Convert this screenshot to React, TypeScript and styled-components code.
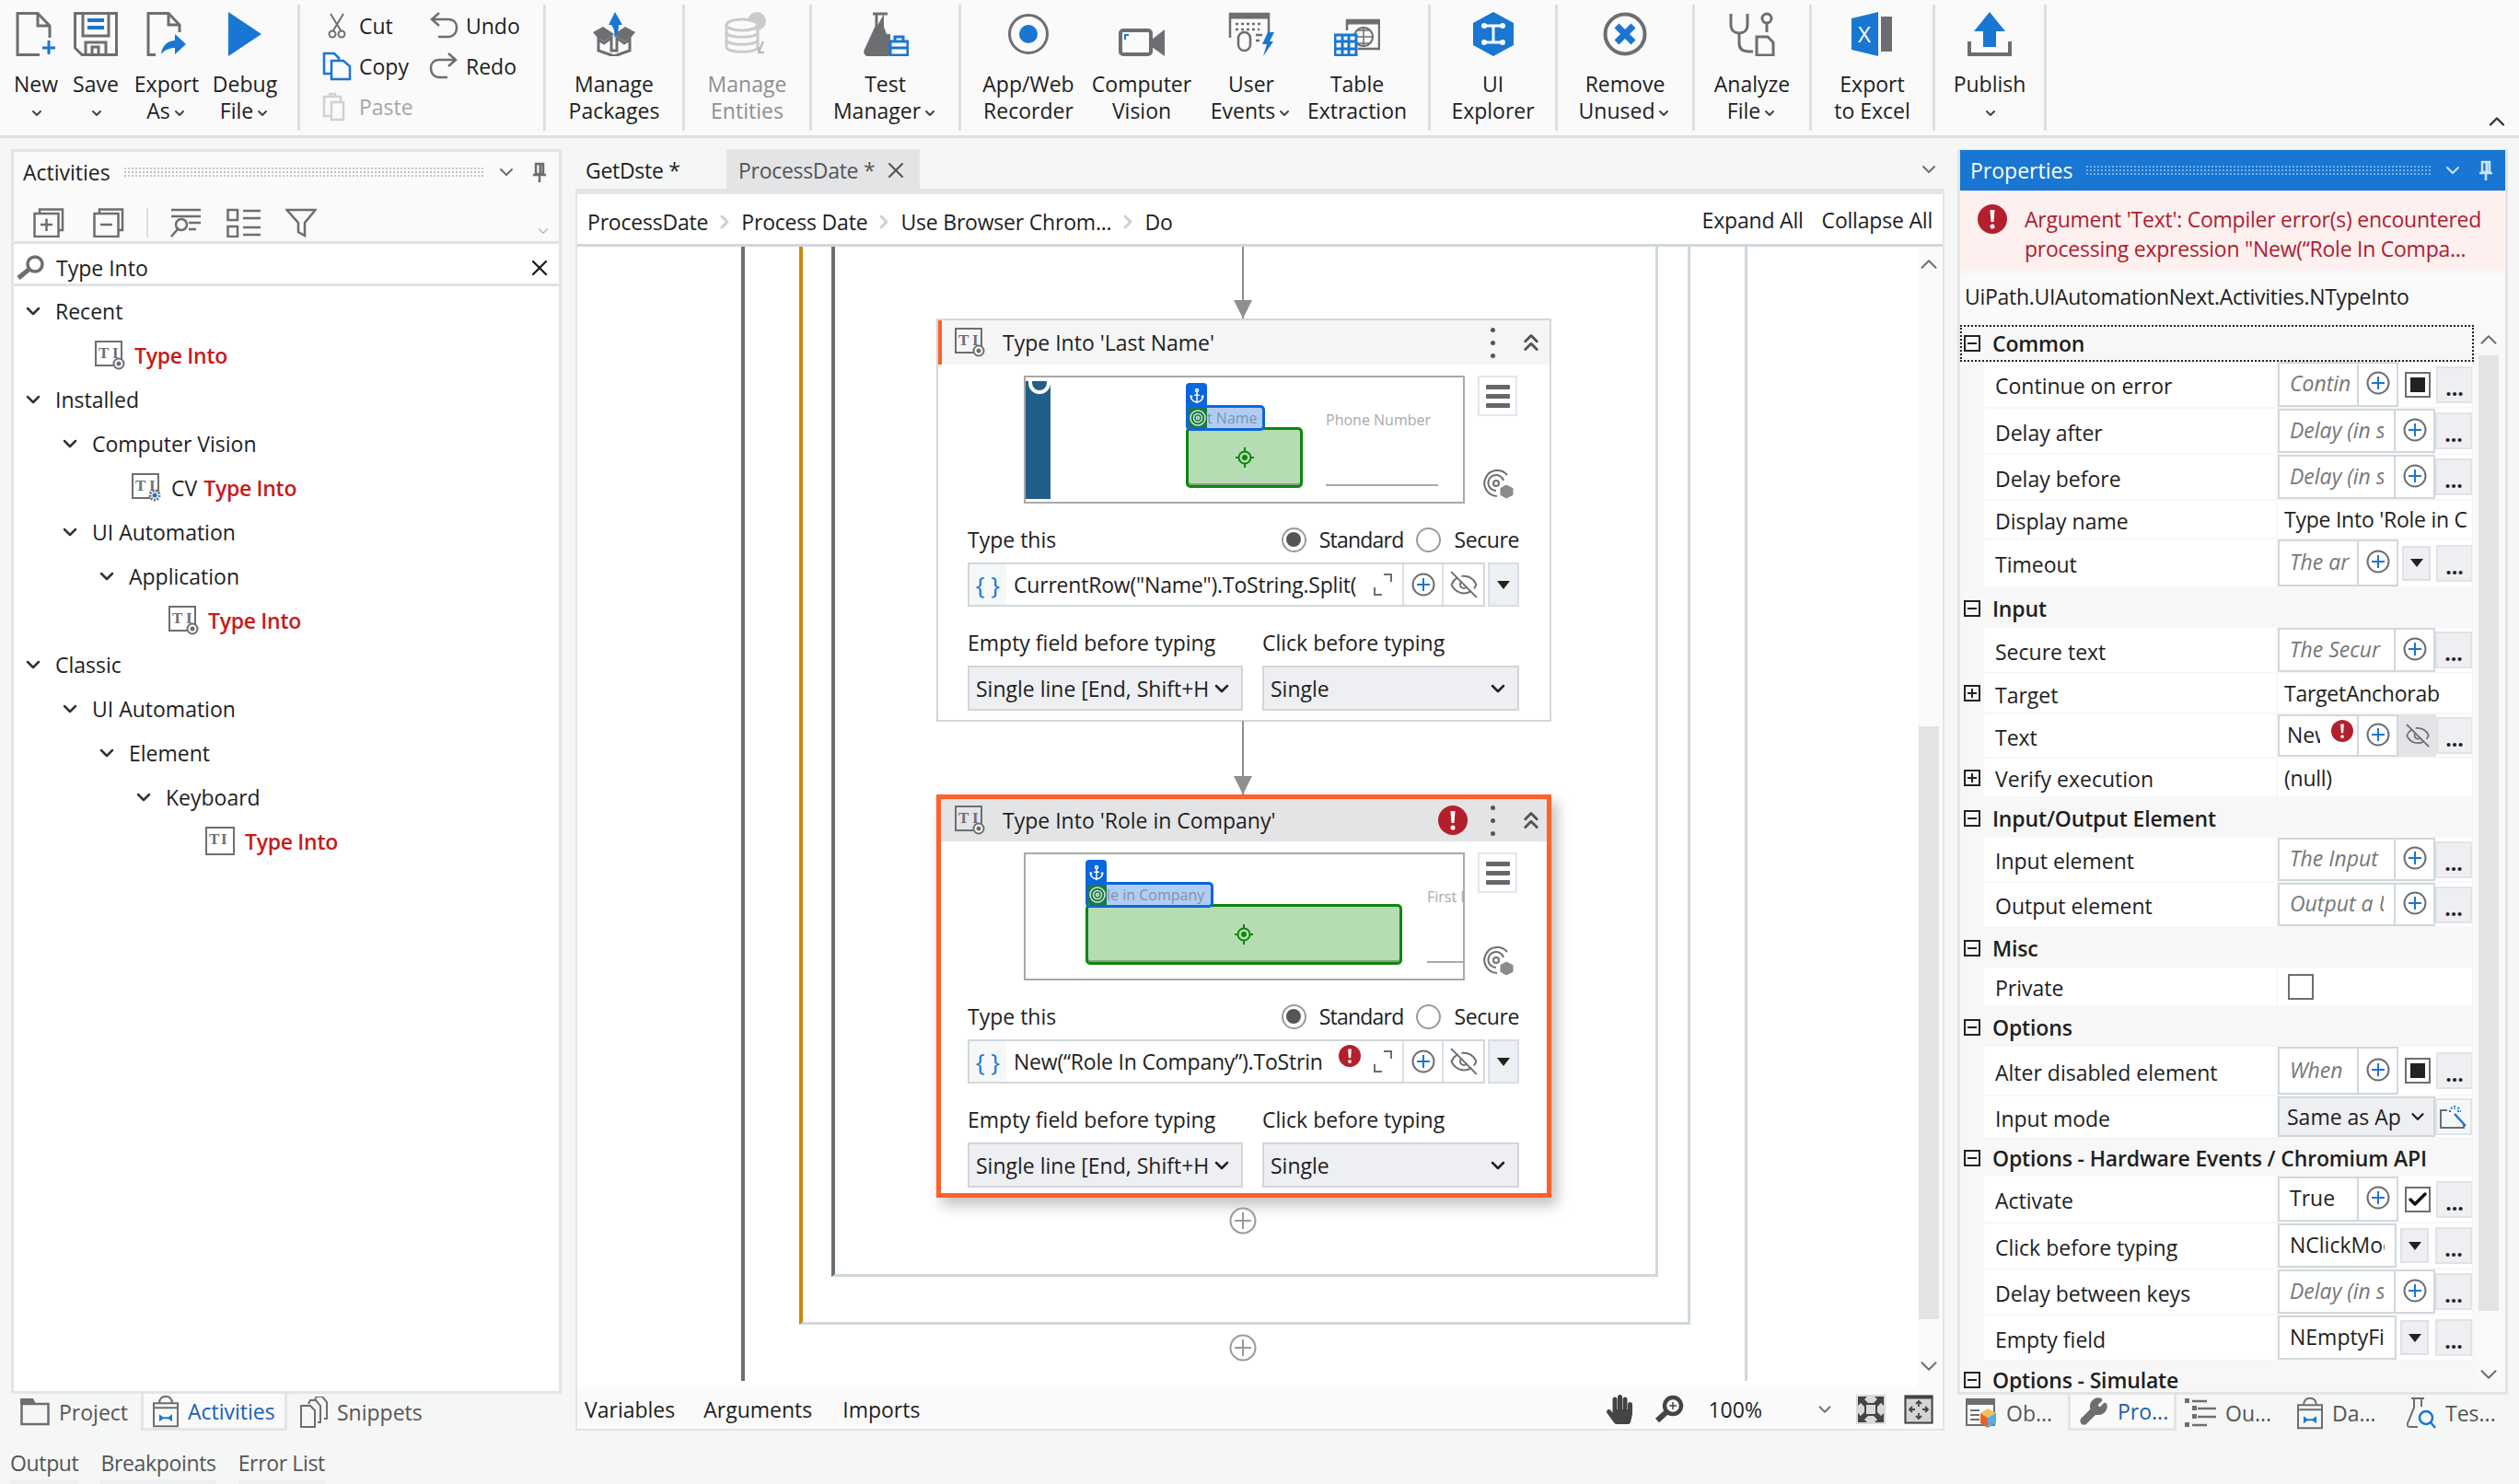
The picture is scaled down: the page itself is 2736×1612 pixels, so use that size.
import React from "react";
import styled, { createGlobalStyle } from "styled-components";
import { Anchor, Check, ChevronDown, ChevronRight, ChevronUp, ChevronsUp, EyeOff, Wrench, X } from "lucide-react";
import { FaHandPaper } from "react-icons/fa";

const G = "#6d6e71";
const B = "#1976d2";
const LINE = "#d0d8dc";
const BAND = "#e3e4e6";

const GlobalStyle = createGlobalStyle`
  html, body { margin: 0; padding: 0; background: #f5f7f7; }
  * { box-sizing: border-box; }
  body { font-family: "Open Sans", "Noto Sans", sans-serif; font-size: 23px; color: #1e1e1e; }
`;

/* ---------- ribbon icons ---------- */
const NewIcon = () => (
  <svg width="44" height="48" viewBox="0 0 44 48" fill="none" stroke={G} strokeWidth="3">
    <path d="M26 46.500H2V1.500H24L37 15V28M24 1.500V15H37" />
    <path d="M36 31v15M29 39h14" stroke={B} />
  </svg>
);
const SaveIcon = () => (
  <svg width="48" height="48" viewBox="0 0 48 48" fill="none" stroke={G} strokeWidth="3">
    <path d="M1.500 1.500H46.500V46.500H9L1.500 39Z" />
    <path d="M10 2V26H38V2" />
    <path d="M15 9H33M15 17H33" stroke={B} strokeWidth="4" />
    <path d="M13 46V33H35V46M20 46V38H27V46" />
  </svg>
);
const ExportIcon = () => (
  <svg width="44" height="48" viewBox="0 0 44 48" fill="none" stroke={G} strokeWidth="3">
    <path d="M10 46.500H2V1.500H24L36 14V22M24 1.500V14H36" />
    <path d="M16 46C17 36 24 31 31 31V24L43 35L31 46V39C25 39 20 41 16 46Z" fill={B} stroke="none" />
  </svg>
);
const PlayIcon = () => (
  <svg width="36" height="48" viewBox="0 0 36 48">
    <path d="M0 0L36 24L0 48Z" fill={B} />
  </svg>
);
const CutIcon = () => (
  <svg width="22" height="28" viewBox="0 0 22 28" fill="none" stroke={G} strokeWidth="2">
    <path d="M4 1L15 19M18 1L7 19" />
    <circle cx="6" cy="23" r="3.500" />
    <circle cx="16" cy="23" r="3.500" />
  </svg>
);
const CopyIcon = () => (
  <svg width="32" height="32" viewBox="0 0 32 32" fill="none" stroke={B} strokeWidth="2.500">
    <path d="M10 24H2V2H13L18 7V10" />
    <path d="M10 10H23L30 16V30H10Z" />
  </svg>
);
const PasteIcon = () => (
  <svg width="32" height="32" viewBox="0 0 32 32" fill="none" stroke="#cfd2d4" strokeWidth="2.500">
    <path d="M9 26H2V5H20V10M8 5V2H14V5" />
    <path d="M10 11H23V30H10Z" />
  </svg>
);
const UndoIcon = () => (
  <svg width="32" height="30" viewBox="0 0 32 30" fill="none" stroke={G} strokeWidth="2.500">
    <path d="M11 1L3 8L11 15M3 8H21C27 8 30 12 30 17C30 23 26 27 21 27H10" />
  </svg>
);
const RedoIcon = () => (
  <svg width="32" height="30" viewBox="0 0 32 30" fill="none" stroke={G} strokeWidth="2.500">
    <path d="M21 1L29 8L21 15M29 8H11C5 8 2 12 2 17C2 23 6 27 11 27H20" />
  </svg>
);
const PackageIcon = () => (
  <svg width="48" height="48" viewBox="0 0 48 48">
    <path d="M1 22L12 16L24 24L13 32L6 28ZM47 22L36 16L24 24L35 32L42 28Z" fill={G} />
    <path d="M7 30V42L24 48L41 42V30L35 34L27 28V42H21V28L13 34Z" fill="none" stroke={G} strokeWidth="3" />
    <path d="M25 0L33 14H29C29 20 28 24 24 28C25 22 24 18 21 14H18Z" fill={B} />
  </svg>
);
const EntitiesIcon = () => (
  <svg width="50" height="48" viewBox="0 0 50 48" fill="none" stroke="#c9cbcd" strokeWidth="3">
    <circle cx="36" cy="10" r="10" fill="#c9cbcd" stroke="none" />
    {[14, 22, 30, 38].map((y) => (
      <path key={y} d={`M3 ${y}C3 ${y + 7} 37 ${y + 7} 37 ${y}`} />
    ))}
    <ellipse cx="20" cy="14" rx="17" ry="6" fill="#fafafa" />
    <path d="M3 14V38M37 14V38" />
    <path d="M43 32L38 44M38 38V44H44" stroke="#b5b7b9" strokeWidth="2" />
  </svg>
);
const FlaskIcon = () => (
  <svg width="50" height="48" viewBox="0 0 50 48" fill="none">
    <path d="M11 2H27M15 2V16L3 42C2 45 4 47 7 47H28" stroke={G} strokeWidth="3" />
    <path d="M23 2V16L26 24H30V47H7C3 47 2 44 3 42L9 28Z" fill={G} />
    <path d="M30 32H49V47H30ZM35 32V27H44V32M30 39H49" stroke={B} strokeWidth="3" fill="#fafafa" />
  </svg>
);
const RecordIcon = () => (
  <svg width="46" height="48" viewBox="0 0 46 48" fill="none">
    <circle cx="23" cy="24" r="20.500" stroke={G} strokeWidth="3" />
    <circle cx="23" cy="24" r="10" fill={B} />
  </svg>
);
const CameraIcon = () => (
  <svg width="50" height="48" viewBox="0 0 50 48" fill="none">
    <rect x="2" y="20" width="33" height="26" rx="3" stroke={G} strokeWidth="4" />
    <path d="M36 30L50 19V48L36 38Z" fill={G} />
    <path d="M7 30V25H11" stroke={B} strokeWidth="2" />
  </svg>
);
const UserEventsIcon = () => (
  <svg width="50" height="48" viewBox="0 0 50 48" fill="none" stroke={G} strokeWidth="2.500">
    <path d="M2 28V2H44V24" />
    <path d="M2 5H44" strokeWidth="5" />
    <path d="M8 13H38M8 19H34" strokeDasharray="3 3" />
    <rect x="11" y="22" width="13" height="20" rx="6.500" fill="#fafafa" />
    <path d="M30 25H37M30 31H34" />
    <path d="M43 22H50L45 32H49L38 48L42 35H37Z" fill={B} stroke="none" />
  </svg>
);
const TableExtractIcon = () => (
  <svg width="50" height="48" viewBox="0 0 50 48" fill="none" stroke={G} strokeWidth="2">
    <path d="M14 20V9H49V40H26" strokeWidth="2.500" />
    <path d="M14 11H49" strokeWidth="5" />
    <circle cx="32" cy="27" r="10" />
    <path d="M22 27H42M32 17V37M25 20H39M25 34H39" strokeWidth="1.500" />
    <path d="M1 25H24V47H1ZM1 32H24M1 40H24M9 25V47M16 25V47" stroke={B} strokeWidth="3" fill="#fafafa" />
  </svg>
);
const HexIcon = () => (
  <svg width="46" height="48" viewBox="0 0 46 48">
    <path d="M23 0L45 12V36L23 48L1 36V12Z" fill={B} />
    <path d="M13 15H33M23 15V33M13 33H33" stroke="#fff" strokeWidth="3" fill="none" />
    {[[13, 15], [33, 15], [13, 33], [33, 33]].map(([x, y]) => (
      <circle key={x * y} cx={x} cy={y} r="3" fill="#fff" />
    ))}
  </svg>
);
const RemoveIcon = () => (
  <svg width="48" height="48" viewBox="0 0 48 48" fill="none">
    <circle cx="24" cy="24" r="21.500" stroke={G} strokeWidth="4" />
    <path d="M15 15L33 33M33 15L15 33" stroke={B} strokeWidth="7" />
  </svg>
);
const AnalyzeIcon = () => (
  <svg width="50" height="48" viewBox="0 0 50 48" fill="none" stroke={G} strokeWidth="3">
    <path d="M2 2V14C2 20 6 23 11 23C16 23 20 20 20 14V2" />
    <path d="M11 23V34C11 40 15 43 22 43H26" />
    <circle cx="41" cy="7" r="5" />
    <path d="M41 12V22" />
    <path d="M30 47V27H42L48 33V47Z" />
  </svg>
);
const ExcelIcon = () => (
  <svg width="44" height="48" viewBox="0 0 44 48">
    <path d="M0 7L29 0V48L0 41Z" fill={B} />
    <rect x="32" y="5" width="12" height="38" fill={G} />
    <text x="7" y="33" fill="#fff" fontSize="24" fontFamily="Open Sans">X</text>
  </svg>
);
const PublishIcon = () => (
  <svg width="48" height="48" viewBox="0 0 48 48" fill="none">
    <path d="M24 0L41 21H31V38H17V21H7Z" fill={B} />
    <path d="M2 32V46H46V32" stroke={G} strokeWidth="4" />
  </svg>
);

/* ---------- small icons ---------- */
const TreeAddIcon = ({ minus }: { minus?: boolean }) => (
  <svg width="34" height="32" viewBox="0 0 34 32" fill="none" stroke={G} strokeWidth="2.500">
    <path d="M7 6V1.500H32V24H28" />
    <rect x="1.500" y="6" width="26" height="25" />
    <path d={minus ? "M8 18H21" : "M8 18H21M14.500 11.500V25"} />
  </svg>
);
const SearchListIcon = () => (
  <svg width="34" height="32" viewBox="0 0 34 32" fill="none" stroke={G} strokeWidth="2.500">
    <path d="M1 2H33M1 9H33M20 16H33M20 23H28" />
    <circle cx="12" cy="18" r="6" />
    <path d="M8 23L1 31" />
  </svg>
);
const GridListIcon = () => (
  <svg width="38" height="32" viewBox="0 0 38 32" fill="none" stroke={G} strokeWidth="2.500">
    <path d="M1.500 2H12V13H1.500ZM1.500 20H12V31H1.500ZM18 3H37M18 11H37M18 21H37M18 29H37" />
  </svg>
);
const FunnelIcon = () => (
  <svg width="34" height="32" viewBox="0 0 34 32" fill="none" stroke={G} strokeWidth="2.500">
    <path d="M1.500 2H32.500L21 16V30L14 26V16Z" />
  </svg>
);
const PinIcon = ({ c = G }: { c?: string }) => (
  <svg width="16" height="22" viewBox="0 0 16 22" fill="none" stroke={c} strokeWidth="2.500">
    <path d="M4 2H12V13H4ZM1 14H15M8 14V22" />
    <path d="M9 2V13" strokeWidth="3" />
  </svg>
);
const MagnifierIcon = () => (
  <svg width="32" height="28" viewBox="0 0 32 28" fill="none" stroke={G}>
    <circle cx="21" cy="10" r="8" strokeWidth="3.500" />
    <path d="M14 16L3 25" strokeWidth="5" />
  </svg>
);
const TypeIntoIcon = ({ mode = "target" }: { mode?: "target" | "gear" | "plain" }) => (
  <svg width="33" height="32" viewBox="0 0 33 32" fill="none" stroke={G} strokeWidth="2">
    <path d={mode === "plain" ? "M1 1H31V30H1Z" : "M20 27H1V1H29V20"} />
    <text x="4" y="19" fill={G} stroke="none" fontSize="17" fontWeight="700" fontFamily="Liberation Serif">T</text>
    <text x={mode === "plain" ? 17 : 19} y="19" fill={G} stroke="none" fontSize="17" fontWeight="700" fontFamily="Liberation Serif">I</text>
    {mode === "target" && <circle cx="26" cy="25" r="5.500" fill="#fff" />}
    {mode === "target" && <circle cx="26" cy="25" r="1.500" fill={G} />}
    {mode === "gear" && <circle cx="25" cy="24" r="5" fill="#fff" strokeWidth="3" strokeDasharray="2 1.400" />}
    {mode === "gear" && <circle cx="25" cy="24" r="2.500" fill={B} stroke="none" />}
  </svg>
);
const PlusCircle = ({ s = 26 }: { s?: number }) => (
  <svg width={s} height={s} viewBox="0 0 26 26" fill="none">
    <circle cx="13" cy="13" r="11.500" stroke={G} strokeWidth="2" />
    <path d="M13 6V20M6 13H20" stroke={B} strokeWidth="2" />
  </svg>
);
const GrayPlus = () => (
  <svg width="30" height="30" viewBox="0 0 30 30" fill="#fff">
    <circle cx="15" cy="15" r="13.500" stroke="#9a9a9a" strokeWidth="2" />
    <path d="M15 6V24M6 15H24" stroke="#9a9a9a" strokeWidth="2" />
  </svg>
);
const ErrorBadge = ({ s = 32 }: { s?: number }) => (
  <svg width={s} height={s} viewBox="0 0 32 32">
    <circle cx="16" cy="16" r="16" fill="#b3202c" />
    <path d="M13.500 6H18.500L17.500 19H14.500Z" fill="#fff" />
    <circle cx="16" cy="24" r="2.500" fill="#fff" />
  </svg>
);
const ExpandIcon = () => (
  <svg width="20" height="24" viewBox="0 0 20 24" fill="none" stroke={G} strokeWidth="2">
    <path d="M11 1H19V9M1 15V23H9" />
  </svg>
);
const Crosshair = () => (
  <svg width="20" height="22" viewBox="0 0 20 22" fill="none" stroke="#0d860d" strokeWidth="2">
    <circle cx="10" cy="11" r="6.500" />
    <circle cx="10" cy="11" r="2" fill="#0d860d" />
    <path d="M10 0V4M10 18V22M0 11H3M17 11H20" />
  </svg>
);
const Bullseye = () => (
  <svg width="18" height="18" viewBox="0 0 18 18" fill="none" stroke="#cfe6d8" strokeWidth="1.500">
    <circle cx="9" cy="9" r="8" />
    <circle cx="9" cy="9" r="4.500" />
    <circle cx="9" cy="9" r="1.500" />
  </svg>
);
const TargetCube = () => (
  <svg width="34" height="32" viewBox="0 0 34 32" fill="none" stroke={G} strokeWidth="2">
    <path d="M27 6A14 14 0 1 0 16 29" />
    <path d="M23 12A8.500 8.500 0 1 0 15 23" />
    <circle cx="15" cy="15" r="3" />
    <path d="M26 16L34 20V28L26 32L19 28V20Z" fill="#8a8b8d" stroke="#fff" strokeWidth="1" />
  </svg>
);
const FolderIcon = () => (
  <svg width="32" height="30" viewBox="0 0 32 30" fill="none" stroke={G} strokeWidth="2.500">
    <path d="M1.500 6H30.500V28H1.500Z" />
    <path d="M0 0H14L17 6H0Z" fill={G} stroke="none" />
  </svg>
);
const BagIcon = ({ size = 28 }: { size?: number }) => (
  <svg width={size} height={size * 1.3} viewBox="0 0 28 36" fill="none" stroke={G} strokeWidth="2">
    <path d="M1 10H27V35H1ZM7 10C7 0 21 0 21 10M1 15H27" />
    <path d="M7 22L11 25H17L21 22V30L17 27H11L7 30Z" fill={B} stroke="none" />
  </svg>
);
const SnippetsIcon = () => (
  <svg width="30" height="34" viewBox="0 0 30 34" fill="none" stroke={G} strokeWidth="2">
    <path d="M16 3L18 0H24L29 6V24H26" />
    <path d="M9 8L11 4H17L22 10V28H19" />
    <path d="M1 10H11L16 15V33H1Z" fill="#f5f7f7" />
  </svg>
);
const ObjectsIcon = () => (
  <svg width="34" height="34" viewBox="0 0 34 34" fill="none">
    <rect x="1" y="2" width="30" height="28" fill="#fafafa" stroke={G} strokeWidth="2" />
    <rect x="1" y="2" width="30" height="6" fill={G} />
    <path d="M5 14H15M5 19H15M5 24H15" stroke={G} strokeWidth="2" />
    <path d="M24 12L33 17L24 22L16 17Z" fill="#f0c25c" />
    <path d="M16 17L24 22V33L16 28Z" fill="#e8632c" />
    <path d="M33 17L24 22V33L33 28Z" fill="#5ea9de" />
  </svg>
);
const OutlineIcon = () => (
  <svg width="34" height="32" viewBox="0 0 34 32" fill="none" stroke={G} strokeWidth="2.500">
    <path d="M8 3H24M14 11H34M14 20H34M8 29H24" />
    <path d="M0 0H5V5H0ZM8 8H13V13H8ZM8 17H13V22H8ZM0 26H5V31H0Z" fill={G} stroke="none" />
  </svg>
);
const FlaskSearchIcon = () => (
  <svg width="32" height="34" viewBox="0 0 32 34" fill="none" stroke={G} strokeWidth="2">
    <path d="M5 1H19M8 1V11L1 28C0 31 2 32 4 32H12M16 1V10" />
    <circle cx="21" cy="22" r="7" stroke={B} strokeWidth="2.500" />
    <path d="M26 27L31 33" stroke={B} strokeWidth="2.500" />
  </svg>
);
const ZoomGlass = () => (
  <svg width="32" height="32" viewBox="0 0 32 32" fill="none">
    <circle cx="20" cy="12" r="9" stroke="#444" strokeWidth="4.500" />
    <path d="M20 8V16M16 12H24" stroke="#444" strokeWidth="1.500" />
    <path d="M13 19L3 28" stroke="#444" strokeWidth="6" />
  </svg>
);
const FitIcon = () => (
  <svg width="32" height="32" viewBox="0 0 32 32">
    <rect width="32" height="32" fill="#d9d9d9" />
    <path d="M2 2H12L9 5L13 9L9 13L5 9L2 12ZM30 2H20L23 5L19 9L23 13L27 9L30 12ZM2 30H12L9 27L13 23L9 19L5 23L2 20ZM30 30H20L23 27L19 23L23 19L27 23L30 20Z" fill="#444" />
    <rect x="10" y="10" width="12" height="12" fill="none" stroke="#444" strokeWidth="2" />
  </svg>
);
const FitWindowIcon = () => (
  <svg width="32" height="32" viewBox="0 0 32 32" fill="none">
    <rect width="32" height="32" fill="#d4d4d4" />
    <rect x="1.500" y="1.500" width="29" height="29" stroke="#444" strokeWidth="2" />
    <path d="M1 3H31" stroke="#444" strokeWidth="3" />
    <path d="M16 8V13M16 20V25M6 16H12M20 16H26M13 10L16 7L19 10M13 23L16 26L19 23M9 13L6 16L9 19M23 13L26 16L23 19" stroke="#444" strokeWidth="1.800" />
  </svg>
);
const DropCaret = () => (
  <svg width="14" height="9" viewBox="0 0 14 9"><path d="M0 0H14L7 9Z" fill="#222" /></svg>
);
const MagicIcon = () => (
  <svg width="30" height="26" viewBox="0 0 30 26" fill="none" strokeWidth="2">
    <path d="M8 6H1V25H26V20" stroke={G} />
    <path d="M16 10L28 23" stroke={B} strokeWidth="2.500" />
    <path d="M16 1V5M10 7H13M19 7H23M12 3L14 5M21 3L19 5" stroke={B} strokeDasharray="2 1" />
  </svg>
);

/* ---------- ribbon ---------- */
const Ribbon = styled.header`
  display: flex;
  height: 150px;
  background: #fafafa;
  border-bottom: 3px solid #dcdfe0;
`;
const RibbonGroup = styled.div<{ $w: number; $center?: boolean }>`
  display: flex;
  justify-content: ${(p) => (p.$center ? "center" : "flex-start")};
  width: ${(p) => p.$w}px;
  height: 137px;
  margin-top: 5px;
  border-right: 3px solid #dedfe0;
`;
const RibbonItem = styled.div<{ $w?: number; $muted?: boolean }>`
  display: flex;
  flex-direction: column;
  align-items: center;
  width: ${(p) => (p.$w ? `${p.$w}px` : "auto")};
  padding-top: 8px;
  color: ${(p) => (p.$muted ? "#8d8f91" : "#1e1e1e")};
`;
const IconSlot = styled.div`
  display: flex;
  justify-content: center;
  height: 48px;
`;
const RibbonLabel = styled.div`
  margin-top: 16px;
  text-align: center;
  line-height: 28.500px;
  white-space: nowrap;
`;
const TinyChevron = styled(ChevronDown)`
  display: inline-block;
  width: 16px;
  height: 16px;
  margin-left: 2px;
  vertical-align: -2px;
  stroke-width: 3px;
  color: #444;
`;
const ClipGrid = styled.div`
  display: grid;
  grid-template-columns: 116px 105px;
  grid-auto-rows: 44px;
  padding: 1px 0 0 24px;
`;
const ClipItem = styled.div<{ $muted?: boolean }>`
  display: flex;
  align-items: center;
  gap: 8px;
  color: ${(p) => (p.$muted ? "#a4a6a8" : "#1e1e1e")};
`;
const ClipIcon = styled.div`
  display: flex;
  justify-content: center;
  width: 32px;
`;
const RibbonCollapse = styled(ChevronUp)`
  margin: 118px 10px 0 auto;
  width: 28px;
  height: 28px;
  color: #333;
`;

type RItem = { icon: React.ReactNode; lines: [string, string]; chevron?: boolean; w?: number; muted?: boolean };
const Item = ({ icon, lines, chevron, w, muted }: RItem) => (
  <RibbonItem $w={w} $muted={muted}>
    <IconSlot>{icon}</IconSlot>
    <RibbonLabel>
      {lines[0]}
      <br />
      {lines[1]}
      {chevron && <TinyChevron />}
    </RibbonLabel>
  </RibbonItem>
);

const RibbonBar = () => (
  <Ribbon>
    <RibbonGroup $w={326}>
      <Item w={78} icon={<NewIcon />} lines={["New", ""]} chevron />
      <Item w={52} icon={<SaveIcon />} lines={["Save", ""]} chevron />
      <Item w={102} icon={<ExportIcon />} lines={["Export", "As"]} chevron />
      <Item w={68} icon={<PlayIcon />} lines={["Debug", "File"]} chevron />
    </RibbonGroup>
    <RibbonGroup $w={267}>
      <ClipGrid>
        <ClipItem><ClipIcon><CutIcon /></ClipIcon>Cut</ClipItem>
        <ClipItem><ClipIcon><UndoIcon /></ClipIcon>Undo</ClipItem>
        <ClipItem><ClipIcon><CopyIcon /></ClipIcon>Copy</ClipItem>
        <ClipItem><ClipIcon><RedoIcon /></ClipIcon>Redo</ClipItem>
        <ClipItem $muted><ClipIcon><PasteIcon /></ClipIcon>Paste</ClipItem>
      </ClipGrid>
    </RibbonGroup>
    <RibbonGroup $w={151} $center><Item icon={<PackageIcon />} lines={["Manage", "Packages"]} /></RibbonGroup>
    <RibbonGroup $w={138} $center><Item muted icon={<EntitiesIcon />} lines={["Manage", "Entities"]} /></RibbonGroup>
    <RibbonGroup $w={162} $center><Item icon={<FlaskIcon />} lines={["Test", "Manager"]} chevron /></RibbonGroup>
    <RibbonGroup $w={510}>
      <Item w={146} icon={<RecordIcon />} lines={["App/Web", "Recorder"]} />
      <Item w={100} icon={<CameraIcon />} lines={["Computer", "Vision"]} />
      <Item w={138} icon={<UserEventsIcon />} lines={["User", "Events"]} chevron />
      <Item w={92} icon={<TableExtractIcon />} lines={["Table", "Extraction"]} />
    </RibbonGroup>
    <RibbonGroup $w={138} $center><Item icon={<HexIcon />} lines={["UI", "Explorer"]} /></RibbonGroup>
    <RibbonGroup $w={149} $center><Item icon={<RemoveIcon />} lines={["Remove", "Unused"]} chevron /></RibbonGroup>
    <RibbonGroup $w={127} $center><Item icon={<AnalyzeIcon />} lines={["Analyze", "File"]} chevron /></RibbonGroup>
    <RibbonGroup $w={134} $center><Item icon={<ExcelIcon />} lines={["Export", "to Excel"]} /></RibbonGroup>
    <RibbonGroup $w={121} $center><Item icon={<PublishIcon />} lines={["Publish", ""]} chevron /></RibbonGroup>
    <RibbonCollapse />
  </Ribbon>
);

/* ---------- layout ---------- */
const Page = styled.div`
  display: flex;
  flex-direction: column;
  width: 2736px;
  height: 1612px;
  overflow: hidden;
`;
const Main = styled.main`
  display: flex;
  height: 1404px;
  padding: 12px 12px 0;
`;
const SideColumn = styled.section<{ $mr?: number }>`
  display: flex;
  flex-direction: column;
  width: 598px;
  margin-right: ${(p) => p.$mr ?? 0}px;
`;
const DockPanel = styled.div`
  display: flex;
  flex-direction: column;
  height: 1352px;
  background: #fff;
  border: 3px solid ${BAND};
`;
const TitleRow = styled.div<{ $active?: boolean }>`
  display: flex;
  align-items: center;
  flex: none;
  height: ${(p) => (p.$active ? 44 : 50)}px;
  padding: 0 13px ${(p) => (p.$active ? 0 : 6)}px ${(p) => (p.$active ? 11 : 10)}px;
  background: ${(p) => (p.$active ? B : "#fafafa")};
  color: ${(p) => (p.$active ? "#fff" : "#1e1e1e")};
`;
const GripDots = styled.div<{ $active?: boolean }>`
  flex: 1;
  height: 13px;
  margin: 0 12px 0 14px;
  background-image: radial-gradient(${(p) => (p.$active ? "#78b0ea" : "#c2c5c8")} 1px, transparent 1.300px);
  background-size: 4px 4px;
`;
const TitleChevron = styled(ChevronDown)<{ $c?: string }>`
  width: 24px;
  height: 24px;
  margin-right: 16px;
  color: ${(p) => p.$c ?? G};
`;
const ToolStrip = styled.div`
  position: relative;
  display: flex;
  align-items: center;
  flex: none;
  height: 50px;
  padding: 6px 0 0 21px;
  background: #fafafa;
  border-bottom: 3px solid #dfe3e5;
`;
const ToolButton = styled.div<{ $mr: number }>`
  display: flex;
  margin-right: ${(p) => p.$mr}px;
`;
const ToolSep = styled.div`
  width: 2px;
  height: 32px;
  margin-right: 24px;
  background: #dedfe0;
`;
const OverflowGlyph = styled.div`
  position: absolute;
  right: 8px;
  bottom: 2px;
  color: #b5b7b9;
  line-height: 0;
`;
const SearchRow = styled.div`
  display: flex;
  align-items: center;
  flex: none;
  height: 46px;
  padding: 9px 7px 0 2px;
  border-bottom: 3px solid #e1e3e4;
`;
const SearchText = styled.div`
  flex: 1;
  margin-left: 12px;
`;
const TreeList = styled.div`
  flex: 1;
  padding-top: 3px;
`;
const TreeRow = styled.div<{ $pad: number }>`
  display: flex;
  align-items: center;
  height: 48px;
  padding-left: ${(p) => p.$pad}px;
`;
const TreeChevron = styled(ChevronDown)`
  flex: none;
  width: 24px;
  height: 24px;
  margin-right: 12px;
  stroke-width: 2.500px;
  color: #333;
`;
const LeafIcon = styled.div`
  display: flex;
  margin-right: 10px;
`;
const Match = styled.span<{ $prefixed?: boolean }>`
  margin-left: ${(p) => (p.$prefixed ? 7 : 0)}px;
  color: #c8191b;
  font-weight: 600;
  letter-spacing: -0.300px;
`;
const DockTabs = styled.nav`
  display: flex;
  height: 40px;
`;
const DockTab = styled.div<{ $w: number; $active?: boolean; $pl?: number }>`
  display: flex;
  align-items: center;
  gap: 10px;
  width: ${(p) => p.$w}px;
  padding-left: ${(p) => p.$pl ?? 10}px;
  white-space: nowrap;
  color: ${(p) => (p.$active ? "#1a5fb4" : "#555")};
  background: ${(p) => (p.$active ? "#fafafa" : "transparent")};
  border: ${(p) => (p.$active ? `3px solid ${BAND}` : "none")};
  border-top: none;
`;

/* ---------- editor ---------- */
const EditorColumn = styled.section`
  display: flex;
  flex-direction: column;
  width: 1487px;
  height: 1392px;
  margin-right: 14px;
`;
const DocTabs = styled.div`
  display: flex;
  align-items: stretch;
  flex: none;
  height: 43px;
  letter-spacing: -0.300px;
`;
const DocTab = styled.div<{ $active?: boolean; $w: number }>`
  display: flex;
  align-items: center;
  justify-content: space-between;
  width: ${(p) => p.$w}px;
  padding: 2px 12px 0 ${(p) => (p.$active ? 13 : 11)}px;
  background: ${(p) => (p.$active ? BAND : "transparent")};
  color: ${(p) => (p.$active ? "#555" : "#1e1e1e")};
`;
const TabsMenu = styled(ChevronDown)`
  width: 24px;
  height: 24px;
  margin: 10px 5px 0 auto;
  color: ${G};
`;
const EditorFrame = styled.div`
  display: flex;
  flex-direction: column;
  flex: 1;
  border: 2px solid ${BAND};
  border-top: 6px solid ${BAND};
  background: #fff;
`;
const BreadBar = styled.div`
  display: flex;
  align-items: center;
  flex: none;
  height: 57px;
  padding: 6px 11px 0 11px;
  border-bottom: 3px solid ${LINE};
  letter-spacing: -0.200px;
`;
const BreadChevron = styled(ChevronRight)`
  width: 24px;
  height: 26px;
  margin: 0 6px;
  color: #c9d1d5;
  stroke-width: 3px;
`;
const BreadAction = styled.div<{ $ml: string }>`
  margin: 0 0 4px ${(p) => p.$ml};
  white-space: nowrap;
`;
const Canvas = styled.div`
  position: relative;
  flex: 1;
  overflow: hidden;
`;
const Frame = styled.div<{ $x: number; $w: number; $h: number; $left: string; $bottom?: boolean }>`
  position: absolute;
  top: 0;
  left: ${(p) => p.$x}px;
  width: ${(p) => p.$w}px;
  height: ${(p) => p.$h}px;
  border-left: 4px solid ${(p) => p.$left};
  border-right: 3px solid ${LINE};
  border-bottom: ${(p) => (p.$bottom ? `3px solid ${LINE}` : "none")};
`;
const Connector = styled.div<{ $y: number; $h: number }>`
  position: absolute;
  top: ${(p) => p.$y}px;
  left: 722px;
  width: 2px;
  height: ${(p) => p.$h}px;
  background: #8f8f8f;
  &::after {
    content: "";
    position: absolute;
    bottom: 0;
    left: -9px;
    border-left: 10px solid transparent;
    border-right: 10px solid transparent;
    border-top: 20px solid #8f8f8f;
  }
`;
const AddPoint = styled.div<{ $y: number }>`
  position: absolute;
  top: ${(p) => p.$y}px;
  left: 708px;
  display: flex;
`;
const CanvasScroll = styled.div`
  position: absolute;
  top: 0;
  right: 0;
  bottom: 0;
  display: flex;
  flex-direction: column;
  align-items: center;
  width: 27px;
  padding-right: 4px;
  background: #fafafa;
`;
const ScrollArrow = styled.div<{ $mt?: number }>`
  display: flex;
  flex: none;
  margin-top: ${(p) => p.$mt ?? 0}px;
  color: ${G};
`;
const ScrollThumb = styled.div<{ $mt: number; $h: number }>`
  flex: none;
  width: 22px;
  height: ${(p) => p.$h}px;
  margin-top: ${(p) => p.$mt}px;
  background: ${BAND};
`;
const EditorFoot = styled.div`
  display: flex;
  align-items: center;
  flex: none;
  height: 44px;
  padding: 2px 10px 0 8px;
  background: #fafafa;
`;
const FootTab = styled.div<{ $mr: number }>`
  margin-right: ${(p) => p.$mr}px;
`;
const FootIcon = styled.div<{ $ml: number }>`
  display: flex;
  margin-left: ${(p) => p.$ml}px;
`;
const ZoomValue = styled.div`
  margin-left: 26px;
`;

/* ---------- activity card ---------- */
const Card = styled.article<{ $y: number; $selected?: boolean }>`
  position: absolute;
  top: ${(p) => p.$y}px;
  left: 390px;
  width: 668px;
  height: 438px;
  display: flex;
  flex-direction: column;
  background: #fff;
  border: ${(p) => (p.$selected ? "5px solid #ff6129" : `2px solid ${LINE}`)};
  box-shadow: ${(p) => (p.$selected ? "6px 8px 14px rgba(0,0,0,.25)" : "none")};
`;
const CardHead = styled.div<{ $selected?: boolean }>`
  display: flex;
  align-items: center;
  flex: none;
  height: ${(p) => (p.$selected ? 46 : 48)}px;
  padding-left: ${(p) => (p.$selected ? 15 : 14)}px;
  background: ${(p) => (p.$selected ? BAND : "#f5f5f5")};
  border-left: ${(p) => (p.$selected ? "none" : "4px solid #ff6129")};
`;
const CardTitle = styled.div`
  flex: 1;
  margin-left: 19px;
`;
const CardDots = styled.div`
  display: flex;
  flex-direction: column;
  gap: 9px;
  margin: 0 24px 0 25px;
  & > i {
    width: 5px;
    height: 5px;
    border-radius: 50%;
    background: #555;
  }
`;
const CardCollapse = styled(ChevronsUp)<{ $selected?: boolean }>`
  width: 30px;
  height: 30px;
  margin-right: ${(p) => (p.$selected ? 2 : 5)}px;
  stroke-width: 2.400px;
  color: #555;
`;
const CardBody = styled.div<{ $selected?: boolean }>`
  display: flex;
  flex-direction: column;
  padding: 12px ${(p) => (p.$selected ? 30 : 33)}px 0 ${(p) => (p.$selected ? 29 : 32)}px;
`;
const PreviewRow = styled.div`
  display: flex;
  gap: 14px;
  margin-left: 61px;
  height: 139px;
`;
const Preview = styled.div`
  position: relative;
  width: 479px;
  height: 139px;
  overflow: hidden;
  border: 2px solid #a9a9a9;
  background: #fff;
`;
const SideBar = styled.div`
  position: absolute;
  top: 4px;
  left: 0;
  width: 27px;
  height: 128px;
  overflow: hidden;
  background: #215f8a;
  &::before {
    content: "";
    position: absolute;
    top: -10px;
    left: 3px;
    width: 16px;
    height: 16px;
    border-radius: 50%;
    border: 4px solid #fff;
  }
`;
const GreenBox = styled.div<{ $x: number; $w: number }>`
  position: absolute;
  top: 54px;
  left: ${(p) => p.$x}px;
  display: flex;
  align-items: center;
  justify-content: center;
  width: ${(p) => p.$w}px;
  height: 66px;
  background: #b5dcb3;
  border: 3px solid #0d860d;
  border-radius: 5px;
  box-shadow: inset 0 -2px 0 #8a9a88;
`;
const AnchorTab = styled.div<{ $x: number }>`
  position: absolute;
  top: 6px;
  left: ${(p) => p.$x}px;
  display: flex;
  justify-content: center;
  width: 23px;
  height: 28px;
  padding-top: 5px;
  background: #0a66e0;
  border-radius: 4px 4px 0 0;
  color: #fff;
`;
const AnchorLabel = styled.div<{ $x: number; $w: number }>`
  position: absolute;
  top: 30px;
  left: ${(p) => p.$x}px;
  display: flex;
  align-items: center;
  width: ${(p) => p.$w}px;
  height: 28px;
  overflow: hidden;
  background: #b1cdf3;
  border: 3px solid #0a66e0;
  border-radius: 0 5px 5px 5px;
  font-size: 16px;
  color: #7f93ad;
  white-space: nowrap;
`;
const AnchorMark = styled.div`
  display: flex;
  align-items: center;
  justify-content: center;
  flex: none;
  width: 20px;
  height: 100%;
  background: #1b7a45;
`;
const GhostText = styled.div<{ $x: number }>`
  position: absolute;
  top: 35px;
  left: ${(p) => p.$x}px;
  font-size: 16px;
  color: #a9a9a9;
  white-space: nowrap;
`;
const GhostLine = styled.div<{ $x: number }>`
  position: absolute;
  top: 116px;
  left: ${(p) => p.$x}px;
  width: 122px;
  height: 2px;
  background: #a9a9a9;
`;
const PreviewSide = styled.div`
  display: flex;
  flex-direction: column;
  align-items: center;
  justify-content: space-between;
  width: 43px;
  padding-bottom: 5px;
`;
const MenuButton = styled.div`
  display: flex;
  flex-direction: column;
  align-items: center;
  justify-content: center;
  gap: 5px;
  width: 43px;
  height: 44px;
  border: 2px solid #e3e6ef;
  & > i {
    width: 26px;
    height: 5px;
    border-radius: 1px;
    background: #666;
  }
`;
const FieldHead = styled.div`
  display: flex;
  align-items: center;
  height: 28px;
  margin-top: 25px;
`;
const RadioGroup = styled.div`
  display: flex;
  align-items: center;
  margin-left: auto;
`;
const Radio = styled.div<{ $on?: boolean }>`
  display: flex;
  align-items: center;
  justify-content: center;
  width: 27px;
  height: 27px;
  margin: 0 14px 0 14px;
  border: 2px solid #9a9a9a;
  border-radius: 50%;
  &::after {
    content: "";
    display: ${(p) => (p.$on ? "block" : "none")};
    width: 16px;
    height: 16px;
    border-radius: 50%;
    background: #555;
  }
`;
const RadioText = styled.span<{ $ls: number }>`
  letter-spacing: ${(p) => p.$ls}px;
`;
const ExprRow = styled.div`
  display: flex;
  gap: 3px;
  height: 48px;
  margin-top: 11px;
`;
const ExprBox = styled.div`
  display: flex;
  align-items: center;
  flex: 1;
  min-width: 0;
  border: 2px solid ${LINE};
`;
const Braces = styled.div`
  display: flex;
  align-items: center;
  justify-content: center;
  flex: none;
  width: 40px;
  height: 100%;
  background: #f5f7f9;
  color: ${B};
  font-size: 26px;
`;
const ExprText = styled.div`
  flex: 1;
  min-width: 0;
  margin-left: 8px;
  overflow: hidden;
  white-space: nowrap;
  letter-spacing: -0.200px;
`;
const ExprBadge = styled.div`
  display: flex;
  flex: none;
  margin: -12px 2px 0 10px;
`;
const ExprExpand = styled.div`
  display: flex;
  flex: none;
  margin: 0 11px 0 12px;
`;
const ExprCell = styled.div<{ $w: number }>`
  display: flex;
  align-items: center;
  justify-content: center;
  flex: none;
  width: ${(p) => p.$w}px;
  height: 100%;
  border-left: 2px solid #d9e0ea;
  color: ${G};
`;
const ExprDrop = styled.div`
  display: flex;
  align-items: center;
  justify-content: center;
  flex: none;
  width: 34px;
  background: #eeeff2;
  border: 2px solid #d9dcea;
`;
const SelectRow = styled.div`
  display: grid;
  grid-template-columns: 299px 279px;
  column-gap: 21px;
`;
const SelectLabel = styled.div`
  display: flex;
  align-items: center;
  height: 28px;
  margin-top: 25px;
  white-space: nowrap;
`;
const SelectBox = styled.div`
  display: flex;
  align-items: center;
  height: 49px;
  margin-top: 11px;
  padding: 0 9px 0 7px;
  background: #eeeff2;
  border: 2px solid #d3d5d9;
`;
const SelectText = styled.div<{ $clip?: number }>`
  width: ${(p) => (p.$clip ? `${p.$clip}px` : "auto")};
  flex: ${(p) => (p.$clip ? "none" : 1)};
  overflow: hidden;
  white-space: nowrap;
`;
const SelectChevron = styled(ChevronDown)`
  flex: none;
  width: 24px;
  height: 24px;
  margin-left: auto;
  stroke-width: 2.500px;
  color: #222;
`;

type CardProps = {
  y: number;
  title: string;
  expr: string;
  selected?: boolean;
  preview: React.ReactNode;
};
const ActivityCard = ({ y, title, expr, selected, preview }: CardProps) => (
  <Card $y={y} $selected={selected}>
    <CardHead $selected={selected}>
      <TypeIntoIcon />
      <CardTitle>{title}</CardTitle>
      {selected && <ErrorBadge />}
      <CardDots><i /><i /><i /></CardDots>
      <CardCollapse $selected={selected} />
    </CardHead>
    <CardBody $selected={selected}>
      <PreviewRow>
        <Preview>{preview}</Preview>
        <PreviewSide>
          <MenuButton><i /><i /><i /></MenuButton>
          <TargetCube />
        </PreviewSide>
      </PreviewRow>
      <FieldHead>
        Type this
        <RadioGroup>
          <Radio $on /><RadioText $ls={-0.8}>Standard</RadioText>
          <Radio /><RadioText $ls={-0.4}>Secure</RadioText>
        </RadioGroup>
      </FieldHead>
      <ExprRow>
        <ExprBox>
          <Braces>{"{ }"}</Braces>
          <ExprText>{expr}</ExprText>
          {selected && <ExprBadge><ErrorBadge s={24} /></ExprBadge>}
          <ExprExpand><ExpandIcon /></ExprExpand>
          <ExprCell $w={43}><PlusCircle /></ExprCell>
          <ExprCell $w={45}><EyeOff size={32} strokeWidth={1.5} /></ExprCell>
        </ExprBox>
        <ExprDrop><DropCaret /></ExprDrop>
      </ExprRow>
      <SelectRow>
        <SelectLabel>Empty field before typing</SelectLabel>
        <SelectLabel>Click before typing</SelectLabel>
        <SelectBox>
          <SelectText $clip={252}>Single line [End, Shift+H</SelectText>
          <SelectChevron />
        </SelectBox>
        <SelectBox>
          <SelectText>Single</SelectText>
          <SelectChevron />
        </SelectBox>
      </SelectRow>
    </CardBody>
  </Card>
);

/* ---------- properties ---------- */
const PropsPanel = styled.div`
  display: flex;
  flex-direction: column;
  height: 1353px;
  border: 3px solid ${BAND};
  border-top: 1px solid ${BAND};
  background: #f7f7f7;
`;
const ErrorBanner = styled.div`
  display: flex;
  flex: none;
  height: 84px;
  margin-top: 2px;
  padding: 13px 10px 0 19px;
  background: #fff0f0;
  color: #b01c2e;
  line-height: 32px;
  letter-spacing: -0.250px;
`;
const BannerText = styled.div`
  margin-left: 19px;
  white-space: nowrap;
`;
const TypeName = styled.div`
  display: flex;
  align-items: center;
  flex: none;
  height: 55px;
  margin-top: 5px;
  padding: 0 5px 8px;
  background: #fafafa;
  letter-spacing: -0.300px;
`;
const PropsBody = styled.div`
  display: flex;
  flex: 1;
  min-height: 0;
  overflow: hidden;
`;
const PropsRows = styled.div`
  flex: none;
  width: 558px;
`;
const PropsScroll = styled.div`
  position: relative;
  display: flex;
  flex-direction: column;
  align-items: center;
  flex: 1;
  padding-right: 2px;
  background: #f9f9f9;
`;
const SectionRow = styled.div<{ $h: number; $focus?: boolean }>`
  display: flex;
  align-items: center;
  height: ${(p) => p.$h}px;
  padding-left: 4px;
  font-weight: 600;
  white-space: nowrap;
  letter-spacing: -0.150px;
  outline: ${(p) => (p.$focus ? "2px dotted #222" : "none")};
  outline-offset: -2px;
  background: #f7f7f7;
`;
const Toggle = styled.div`
  position: relative;
  flex: none;
  width: 18px;
  height: 18px;
  margin-right: 13px;
  border: 2px solid #222;
  &::before {
    content: "";
    position: absolute;
    top: 6px;
    left: 2px;
    width: 10px;
    height: 2px;
    background: #222;
  }
`;
const PlusToggle = styled(Toggle)`
  position: absolute;
  top: 50%;
  left: -22px;
  margin: -9px 0 0;
  &::after {
    content: "";
    position: absolute;
    top: 2px;
    left: 6px;
    width: 2px;
    height: 10px;
    background: #222;
  }
`;
const PropRow = styled.div<{ $h: number }>`
  display: grid;
  grid-template-columns: 317px 211px;
  column-gap: 2px;
  height: ${(p) => p.$h}px;
  margin-left: 26px;
  padding-bottom: 2px;
`;
const PropLabel = styled.div`
  position: relative;
  display: flex;
  align-items: center;
  padding: 3px 0 0 12px;
  background: #fff;
  white-space: nowrap;
`;
const PropValue = styled.div`
  display: flex;
  align-items: stretch;
  min-width: 0;
  background: #fff;
  overflow: hidden;
`;
const PlainValue = styled.div<{ $clip?: number }>`
  align-self: center;
  width: ${(p) => (p.$clip ? `${p.$clip}px` : "auto")};
  margin-left: 7px;
  overflow: hidden;
  white-space: nowrap;
  letter-spacing: -0.250px;
`;
const ValueBox = styled.div<{ $w: number; $italic?: boolean; $dark?: boolean; $tight?: boolean }>`
  display: flex;
  align-items: center;
  flex: none;
  width: ${(p) => p.$w}px;
  padding: 0 0 3px ${(p) => (p.$tight ? 8 : 11)}px;
  overflow: hidden;
  white-space: nowrap;
  border: 2px solid ${LINE};
  font-style: ${(p) => (p.$italic ? "italic" : "normal")};
  color: ${(p) => (p.$dark ? "#1e1e1e" : "#777")};
`;
const ValueClip = styled.div<{ $w: number }>`
  flex: none;
  width: ${(p) => p.$w}px;
  overflow: hidden;
`;
const ValueBadge = styled.div`
  display: flex;
  margin: 0 0 8px 12px;
`;
const ValuePlus = styled.div`
  display: flex;
  align-items: center;
  justify-content: center;
  flex: none;
  width: 43px;
  border: 2px solid ${LINE};
  border-left: none;
  padding-bottom: 3px;
`;
const ValueSlot = styled.div<{ $gray?: boolean }>`
  display: flex;
  align-items: center;
  justify-content: center;
  flex: none;
  width: 41px;
  color: ${G};
  background: ${(p) => (p.$gray ? BAND : "transparent")};
`;
const DropSlot = styled.div`
  display: flex;
  align-items: center;
  justify-content: center;
  flex: none;
  width: 31px;
  height: 38px;
  align-self: center;
  margin: 0 6px 0 4px;
  background: #eeeff2;
  border: 2px solid #dfe1e5;
`;
const MoreButton = styled.div`
  display: flex;
  align-items: flex-end;
  justify-content: center;
  align-self: center;
  flex: none;
  width: 40px;
  height: 40px;
  margin-left: auto;
  background: #eeeff2;
  border: 2px solid #e1e3e6;
  font-weight: 700;
  line-height: 30px;
`;
const CheckBox = styled.div<{ $on?: "fill" | "check" }>`
  display: flex;
  align-items: center;
  justify-content: center;
  width: 28px;
  height: 28px;
  border: 2px solid ${G};
  color: #111;
  background: #fff;
  &::after {
    content: "";
    display: ${(p) => (p.$on === "fill" ? "block" : "none")};
    width: 16px;
    height: 16px;
    background: #222;
  }
`;
const PrivateCheck = styled.div`
  display: flex;
  align-items: center;
  margin-left: 11px;
`;
const ModeSelect = styled.div`
  display: flex;
  align-items: center;
  flex: none;
  width: 171px;
  padding: 0 3px 0 8px;
  background: #eeeff2;
  border: 2px solid ${LINE};
  white-space: nowrap;
`;
const ModeText = styled.div`
  flex: none;
  width: 126px;
  margin-right: 5px;
  overflow: hidden;
`;
const ModeIcon = styled.div`
  display: flex;
  align-items: center;
  justify-content: center;
  flex: none;
  align-self: center;
  width: 40px;
  height: 40px;
  margin-left: auto;
  background: #f5f6f8;
  border: 2px solid #e1e3e6;
`;
const PropsTabs = styled.nav`
  display: flex;
  height: 39px;
`;
const PropsTab = styled.div<{ $w: number; $active?: boolean }>`
  display: flex;
  align-items: center;
  gap: 10px;
  width: ${(p) => p.$w}px;
  padding-left: 9px;
  white-space: nowrap;
  color: ${(p) => (p.$active ? "#1a5fb4" : "#555")};
  background: ${(p) => (p.$active ? "#fafafa" : "transparent")};
  border: ${(p) => (p.$active ? `3px solid ${BAND}` : "none")};
  border-top: none;
`;

type Trail = "check" | "fill" | "drop" | "eye" | null;
type PropDef =
  | { kind: "section"; h: number; label: string; focus?: boolean }
  | { kind: "plain"; h: number; label: string; value: string; clip?: number; expand?: boolean }
  | { kind: "box"; h: number; label: string; value: string; wide?: boolean; italic?: boolean; trail?: Trail; plus?: boolean; error?: boolean }
  | { kind: "private"; h: number; label: string }
  | { kind: "mode"; h: number; label: string };

const propRows: PropDef[] = [
  { kind: "section", h: 40, label: "Common", focus: true },
  { kind: "box", h: 51, label: "Continue on error", value: "Contin", italic: true, plus: true, trail: "fill" },
  { kind: "box", h: 50, label: "Delay after", value: "Delay (in s", wide: true, italic: true, plus: true },
  { kind: "box", h: 50, label: "Delay before", value: "Delay (in s", wide: true, italic: true, plus: true },
  { kind: "plain", h: 42, label: "Display name", value: "Type Into 'Role in C", clip: 204 },
  { kind: "box", h: 53, label: "Timeout", value: "The ar", italic: true, plus: true, trail: "drop" },
  { kind: "section", h: 43, label: "Input" },
  { kind: "box", h: 50, label: "Secure text", value: "The Secur", wide: true, italic: true, plus: true },
  { kind: "plain", h: 44, label: "Target", value: "TargetAnchorabl", clip: 170, expand: true },
  { kind: "box", h: 48, label: "Text", value: "New", plus: true, trail: "eye", error: true },
  { kind: "plain", h: 43, label: "Verify execution", value: "(null)", expand: true },
  { kind: "section", h: 43, label: "Input/Output Element" },
  { kind: "box", h: 49, label: "Input element", value: "The Input", wide: true, italic: true, plus: true },
  { kind: "box", h: 49, label: "Output element", value: "Output a U", wide: true, italic: true, plus: true },
  { kind: "section", h: 43, label: "Misc" },
  { kind: "private", h: 43, label: "Private" },
  { kind: "section", h: 43, label: "Options" },
  { kind: "box", h: 54, label: "Alter disabled element", value: "When", italic: true, plus: true, trail: "fill" },
  { kind: "mode", h: 46, label: "Input mode" },
  { kind: "section", h: 41, label: "Options - Hardware Events / Chromium API" },
  { kind: "box", h: 51, label: "Activate", value: "True", plus: true, trail: "check" },
  { kind: "box", h: 50, label: "Click before typing", value: "NClickMoc", trail: "drop" },
  { kind: "box", h: 50, label: "Delay between keys", value: "Delay (in s", wide: true, italic: true, plus: true },
  { kind: "box", h: 50, label: "Empty field", value: "NEmptyFie", trail: "drop" },
  { kind: "section", h: 40, label: "Options - Simulate" },
];

const BoxValue = ({ row }: { row: Extract<PropDef, { kind: "box" }> }) => {
  const outer = row.plus ? (row.wide ? 128 : 88) : 129;
  const clip = row.error ? 36 : outer - (row.wide || !row.plus ? 26 : 22);
  return (
    <PropValue>
      <ValueBox $w={outer} $italic={row.italic} $dark={!row.italic} $tight={row.error}>
        <ValueClip $w={clip}>{row.value}</ValueClip>
        {row.error && <ValueBadge><ErrorBadge s={24} /></ValueBadge>}
      </ValueBox>
      {row.plus && <ValuePlus><PlusCircle /></ValuePlus>}
      {row.trail === "fill" && <ValueSlot><CheckBox $on="fill" /></ValueSlot>}
      {row.trail === "check" && <ValueSlot><CheckBox><Check size={24} strokeWidth={3.5} /></CheckBox></ValueSlot>}
      {row.trail === "drop" && <DropSlot><DropCaret /></DropSlot>}
      {row.trail === "eye" && <ValueSlot $gray><EyeOff size={28} strokeWidth={1.5} /></ValueSlot>}
      <MoreButton>...</MoreButton>
    </PropValue>
  );
};

const PropertyRow = ({ row }: { row: PropDef }) => {
  if (row.kind === "section") {
    return (
      <SectionRow $h={row.h} $focus={row.focus}>
        <Toggle />
        {row.label}
      </SectionRow>
    );
  }
  return (
    <PropRow $h={row.h}>
      <PropLabel>
        {row.kind === "plain" && row.expand && <PlusToggle />}
        {row.label}
      </PropLabel>
      {row.kind === "plain" && (
        <PropValue><PlainValue $clip={row.clip}>{row.value}</PlainValue></PropValue>
      )}
      {row.kind === "box" && <BoxValue row={row} />}
      {row.kind === "private" && (
        <PropValue><PrivateCheck><CheckBox /></PrivateCheck></PropValue>
      )}
      {row.kind === "mode" && (
        <PropValue>
          <ModeSelect>
            <ModeText>Same as Ap</ModeText>
            <ChevronDown size={22} strokeWidth={2.5} />
          </ModeSelect>
          <ModeIcon><MagicIcon /></ModeIcon>
        </PropValue>
      )}
    </PropRow>
  );
};

/* ---------- footer ---------- */
const Footer = styled.footer`
  display: flex;
  gap: 24px;
  height: 58px;
  padding-left: 11px;
  letter-spacing: -0.350px;
`;
const FooterTab = styled.div`
  display: flex;
  align-items: flex-end;
  height: 58px;
  padding-bottom: 2px;
  border-bottom: 5px solid #eeeff0;
  color: #555;
`;

const treeRows: { text?: string; level: number; leaf?: "target" | "gear" | "plain"; prefix?: string }[] = [
  { text: "Recent", level: 0 },
  { level: 1, leaf: "target" },
  { text: "Installed", level: 0 },
  { text: "Computer Vision", level: 1 },
  { level: 2, leaf: "gear", prefix: "CV" },
  { text: "UI Automation", level: 1 },
  { text: "Application", level: 2 },
  { level: 3, leaf: "target" },
  { text: "Classic", level: 0 },
  { text: "UI Automation", level: 1 },
  { text: "Element", level: 2 },
  { text: "Keyboard", level: 3 },
  { level: 4, leaf: "plain" },
];

export default function App() {
  return (
    <Page>
      <GlobalStyle />
      <RibbonBar />
      <Main>
        <SideColumn $mr={15}>
          <DockPanel>
            <TitleRow>
              Activities
              <GripDots />
              <TitleChevron />
              <PinIcon />
            </TitleRow>
            <ToolStrip>
              <ToolButton $mr={31}><TreeAddIcon /></ToolButton>
              <ToolButton $mr={24}><TreeAddIcon minus /></ToolButton>
              <ToolSep />
              <ToolButton $mr={27}><SearchListIcon /></ToolButton>
              <ToolButton $mr={26}><GridListIcon /></ToolButton>
              <ToolButton $mr={0}><FunnelIcon /></ToolButton>
              <OverflowGlyph><ChevronDown size={18} /></OverflowGlyph>
            </ToolStrip>
            <SearchRow>
              <MagnifierIcon />
              <SearchText>Type Into</SearchText>
              <X size={28} strokeWidth={2} />
            </SearchRow>
            <TreeList>
              {treeRows.map((r, i) =>
                r.leaf ? (
                  <TreeRow key={i} $pad={48 + r.level * 40}>
                    <LeafIcon><TypeIntoIcon mode={r.leaf} /></LeafIcon>
                    {r.prefix}
                    <Match $prefixed={!!r.prefix}>Type Into</Match>
                  </TreeRow>
                ) : (
                  <TreeRow key={i} $pad={9 + r.level * 40}>
                    <TreeChevron />
                    {r.text}
                  </TreeRow>
                )
              )}
            </TreeList>
          </DockPanel>
          <DockTabs>
            <DockTab $w={141}><FolderIcon />Project</DockTab>
            <DockTab $w={159} $active><BagIcon />Activities</DockTab>
            <DockTab $w={160} $pl={14}><SnippetsIcon />Snippets</DockTab>
          </DockTabs>
        </SideColumn>

        <EditorColumn>
          <DocTabs>
            <DocTab $w={164}>GetDste *</DocTab>
            <DocTab $w={210} $active>
              ProcessDate *
              <X size={28} strokeWidth={1.8} />
            </DocTab>
            <TabsMenu />
          </DocTabs>
          <EditorFrame>
            <BreadBar>
              ProcessDate<BreadChevron />Process Date<BreadChevron />Use Browser Chrom...<BreadChevron />Do
              <BreadAction $ml="auto">Expand All</BreadAction>
              <BreadAction $ml="20px">Collapse All</BreadAction>
            </BreadBar>
            <Canvas>
              <Frame $x={178} $w={1093} $h={1232} $left="#6d6e71" />
              <Frame $x={241} $w={968} $h={1171} $left="#c98a0c" $bottom />
              <Frame $x={276} $w={898} $h={1119} $left="#6d6e71" $bottom />
              <Connector $y={0} $h={78} />
              <ActivityCard
                y={78}
                title="Type Into 'Last Name'"
                expr={'CurrentRow("Name").ToString.Split('}
                preview={
                  <>
                    <SideBar />
                    <GreenBox $x={174} $w={127}><Crosshair /></GreenBox>
                    <AnchorTab $x={174}><Anchor size={18} /></AnchorTab>
                    <AnchorLabel $x={174} $w={86}><AnchorMark><Bullseye /></AnchorMark>t Name</AnchorLabel>
                    <GhostText $x={326}>Phone Number</GhostText>
                    <GhostLine $x={326} />
                  </>
                }
              />
              <Connector $y={515} $h={80} />
              <ActivityCard
                y={595}
                selected
                title="Type Into 'Role in Company'"
                expr={"New(“Role In Company”).ToStrin"}
                preview={
                  <>
                    <GreenBox $x={65} $w={344}><Crosshair /></GreenBox>
                    <AnchorTab $x={65}><Anchor size={18} /></AnchorTab>
                    <AnchorLabel $x={65} $w={139}><AnchorMark><Bullseye /></AnchorMark>le in Company</AnchorLabel>
                    <GhostText $x={436}>First N</GhostText>
                    <GhostLine $x={436} />
                  </>
                }
              />
              <AddPoint $y={1043}><GrayPlus /></AddPoint>
              <AddPoint $y={1181}><GrayPlus /></AddPoint>
              <CanvasScroll>
                <ScrollArrow $mt={4}><ChevronUp size={30} strokeWidth={1.6} /></ScrollArrow>
                <ScrollThumb $mt={487} $h={644} />
                <ScrollArrow $mt={36}><ChevronDown size={30} strokeWidth={1.6} /></ScrollArrow>
              </CanvasScroll>
            </Canvas>
            <EditorFoot>
              <FootTab $mr={31}>Variables</FootTab>
              <FootTab $mr={33}>Arguments</FootTab>
              <FootTab $mr={0}>Imports</FootTab>
              <FootIcon $ml={744}><FaHandPaper size={32} color="#444" /></FootIcon>
              <FootIcon $ml={22}><ZoomGlass /></FootIcon>
              <ZoomValue>100%</ZoomValue>
              <FootIcon $ml={57}><ChevronDown size={22} color={G} strokeWidth={2} /></FootIcon>
              <FootIcon $ml={23}><FitIcon /></FootIcon>
              <FootIcon $ml={20}><FitWindowIcon /></FootIcon>
            </EditorFoot>
          </EditorFrame>
        </EditorColumn>

        <SideColumn>
          <PropsPanel>
            <TitleRow $active>
              Properties
              <GripDots $active />
              <TitleChevron $c="#cfe3f8" />
              <PinIcon c="#cfe3f8" />
            </TitleRow>
            <ErrorBanner>
              <ErrorBadge />
              <BannerText>
                Argument 'Text': Compiler error(s) encountered
                <br />
                processing expression "New(“Role In Compa...
              </BannerText>
            </ErrorBanner>
            <TypeName>UiPath.UIAutomationNext.Activities.NTypeInto</TypeName>
            <PropsBody>
              <PropsRows>
                {propRows.map((row) => (
                  <PropertyRow key={row.label} row={row} />
                ))}
              </PropsRows>
              <PropsScroll>
                <ScrollArrow $mt={1}><ChevronUp size={30} strokeWidth={1.6} /></ScrollArrow>
                <ScrollThumb $mt={2} $h={1038} />
                <ScrollArrow $mt={54}><ChevronDown size={30} strokeWidth={1.6} /></ScrollArrow>
              </PropsScroll>
            </PropsBody>
          </PropsPanel>
          <PropsTabs>
            <PropsTab $w={120}><ObjectsIcon />Ob...</PropsTab>
            <PropsTab $w={118} $active><Wrench size={32} color={G} fill={G} />Pro...</PropsTab>
            <PropsTab $w={122}><OutlineIcon />Ou...</PropsTab>
            <PropsTab $w={119}><BagIcon />Da...</PropsTab>
            <PropsTab $w={119}><FlaskSearchIcon />Tes...</PropsTab>
          </PropsTabs>
        </SideColumn>
      </Main>
      <Footer>
        <FooterTab>Output</FooterTab>
        <FooterTab>Breakpoints</FooterTab>
        <FooterTab>Error List</FooterTab>
      </Footer>
    </Page>
  );
}
